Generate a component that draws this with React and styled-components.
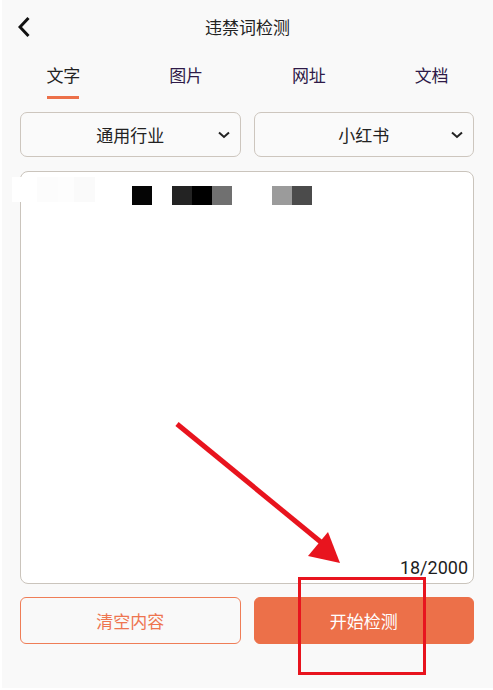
import React from "react";
import styled, { createGlobalStyle } from "styled-components";

const GlobalStyle = createGlobalStyle`
  html, body {
    margin: 0;
    padding: 0;
    background: #ffffff;
  }
  body {
    font-family: "Noto Sans CJK SC", "Noto Sans", sans-serif;
  }
`;

const Page = styled.div`
  position: relative;
  width: 491px;
  height: 688px;
  margin-left: 2px;
  background: #f9f9f9;
  display: flex;
  flex-direction: column;
`;

const Header = styled.header`
  height: 54px;
  display: grid;
  grid-template-columns: 46px 1fr 46px;
  align-items: center;
`;

const BackButton = styled.button`
  border: none;
  background: none;
  padding: 0;
  height: 54px;
  display: flex;
  align-items: center;
  justify-content: center;
  cursor: pointer;
`;

const Title = styled.h1`
  margin: 0;
  text-align: center;
  font-size: 17px;
  font-weight: 400;
  color: #222;
  line-height: 24px;
`;

const Tabs = styled.nav`
  display: flex;
`;

const Tab = styled.div`
  flex: 1;
  display: flex;
  flex-direction: column;
  align-items: center;
  padding-top: 10px;
  font-size: 17px;
  line-height: 22px;
  color: ${({ active }) => (active ? "#222222" : "#2e1a48")};
`;

const Underline = styled.span`
  margin-top: 10px;
  width: 32px;
  height: 3px;
  background: ${({ active }) => (active ? "#ec7049" : "transparent")};
`;

const Body = styled.main`
  padding: 13px 19px 0 18px;
  display: flex;
  flex-direction: column;
`;

const Row = styled.div`
  display: grid;
  grid-template-columns: 1fr 1fr;
  column-gap: 13px;
`;

const Select = styled.div`
  height: 45px;
  box-sizing: border-box;
  border: 1px solid #cdc6be;
  border-radius: 7px;
  background: #fafafa;
  display: grid;
  grid-template-columns: 32px 1fr 32px;
  align-items: center;
  font-size: 17px;
  color: #222;
`;

const SelectLabel = styled.span`
  text-align: center;
`;

const Caret = styled.span`
  display: flex;
  justify-content: center;
`;

const TextBox = styled.div`
  margin-top: 14px;
  height: 413px;
  box-sizing: border-box;
  border: 1px solid #cac4bc;
  border-radius: 8px;
  background: #ffffff;
  padding: 5px 5px 5px 0;
  display: flex;
  flex-direction: column;
`;

const Mosaic = styled.div`
  display: flex;
  align-items: flex-start;
`;

const Patch = styled.div`
  margin-left: -9px;
  width: 83px;
  height: 25px;
  background: linear-gradient(
    90deg,
    #ffffff 0 30%,
    #fcfcfc 30% 55%,
    #fdfdfd 55% 75%,
    #fafafa 75% 100%
  );
`;

const Block = styled.div`
  margin-top: 9px;
  margin-left: ${({ gap }) => gap || 0}px;
  width: 20px;
  height: 19px;
  background: ${({ color }) => color};
`;

const Count = styled.div`
  margin-top: auto;
  align-self: flex-end;
  font-family: Roboto, "Liberation Sans", sans-serif;
  font-size: 18px;
  line-height: 21px;
  color: #1d1d1d;
`;

const Actions = styled(Row)`
  margin-top: 13px;
`;

const Button = styled.button`
  height: 47px;
  box-sizing: border-box;
  border-radius: 6px;
  font-family: "Noto Sans CJK SC", sans-serif;
  font-size: 17px;
  cursor: pointer;
  border: 1px solid #ef7d57;
  background: ${({ primary }) => (primary ? "#ec7049" : "#f9f9f9")};
  color: ${({ primary }) => (primary ? "#ffffff" : "#ee7550")};
  ${({ primary }) => primary && "border-color: #ec7049;"}
`;

const Annotation = styled.svg`
  position: absolute;
  left: -2px;
  top: 0;
  width: 493px;
  height: 690px;
  pointer-events: none;
`;

const blocks = [
  { gap: 37, color: "#050505" },
  { gap: 20, color: "#232323" },
  { gap: 0, color: "#000000" },
  { gap: 0, color: "#707070" },
  { gap: 40, color: "#9b9b9b" },
  { gap: 0, color: "#4b4b4b" },
];

const tabs = ["文字", "图片", "网址", "文档"];

const Chevron = () => (
  <svg width="12" height="8" viewBox="0 0 12 8">
    <path d="M1 1.5 L6 6 L11 1.5" fill="none" stroke="#222" strokeWidth="2" />
  </svg>
);

export default function App() {
  return (
    <>
      <GlobalStyle />
      <Page>
        <Header>
          <BackButton aria-label="back">
            <svg width="14" height="22" viewBox="0 0 14 22">
              <path
                d="M10.5 2 L2 11 L10.5 20"
                fill="none"
                stroke="#111"
                strokeWidth="3"
              />
            </svg>
          </BackButton>
          <Title>违禁词检测</Title>
          <span />
        </Header>

        <Tabs>
          {tabs.map((t, i) => (
            <Tab key={t} active={i === 0}>
              {t}
              <Underline active={i === 0} />
            </Tab>
          ))}
        </Tabs>

        <Body>
          <Row>
            <Select>
              <span />
              <SelectLabel>通用行业</SelectLabel>
              <Caret>
                <Chevron />
              </Caret>
            </Select>
            <Select>
              <span />
              <SelectLabel>小红书</SelectLabel>
              <Caret>
                <Chevron />
              </Caret>
            </Select>
          </Row>

          <TextBox>
            <Mosaic>
              <Patch />
              {blocks.map((b, i) => (
                <Block key={i} gap={b.gap} color={b.color} />
              ))}
            </Mosaic>
            <Count>18/2000</Count>
          </TextBox>

          <Actions>
            <Button>清空内容</Button>
            <Button primary>开始检测</Button>
          </Actions>
        </Body>

        <Annotation viewBox="0 0 493 690">
          <line
            x1="177"
            y1="424"
            x2="322"
            y2="543"
            stroke="#e8141e"
            strokeWidth="5"
          />
          <polygon points="308,556 328,532 340,563" fill="#e8141e" />
          <rect
            x="299.5"
            y="578.5"
            width="125"
            height="95"
            fill="none"
            stroke="#e8141e"
            strokeWidth="3"
          />
        </Annotation>
      </Page>
    </>
  );
}
